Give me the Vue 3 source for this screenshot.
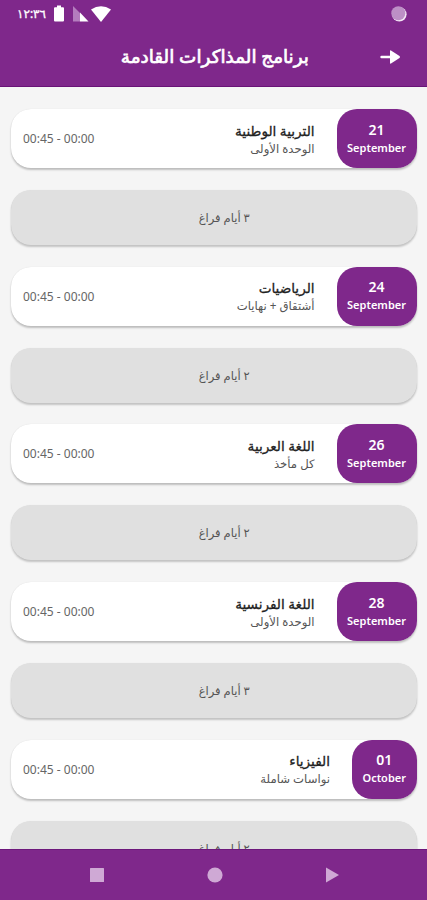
<script setup>
import { ref } from "vue";

const exams = ref([
  { id: 1, day: "21", month: "September", title: "التربية الوطنية", note: "الوحدة الأولى", time: "00:45 - 00:00", gap: "٣ أيام فراغ" },
  { id: 2, day: "24", month: "September", title: "الرياضيات", note: "أشتقاق + نهايات", time: "00:45 - 00:00", gap: "٢ أيام فراغ" },
  { id: 3, day: "26", month: "September", title: "اللغة العربية", note: "كل مأخذ", time: "00:45 - 00:00", gap: "٢ أيام فراغ" },
  { id: 4, day: "28", month: "September", title: "اللغة الفرنسية", note: "الوحدة الأولى", time: "00:45 - 00:00", gap: "٣ أيام فراغ" },
  { id: 5, day: "01", month: "October", title: "الفيزياء", note: "نواسات شاملة", time: "00:45 - 00:00", gap: "٢ أيام فراغ" },
]);
</script>

<template>
  <div class="screen" dir="rtl">
    <header class="top">
      <div class="status" dir="ltr">
        <span class="clock">١٢:٣٦</span>
        <svg class="battery" width="10" height="17" viewBox="0 0 10 17">
          <path d="M3 0.5h4v1.8h2a1 1 0 0 1 1 1V15.5a1 1 0 0 1-1 1H1a1 1 0 0 1-1-1V3.3a1 1 0 0 1 1-1h2z" fill="#fff" />
        </svg>
        <svg class="signal" width="16" height="16" viewBox="0 0 16 16">
          <path d="M0 0L7 7V15.5H0z" fill="#b47dbe" />
          <path d="M7 6.5L15.5 15.5H7z" fill="#fff" />
        </svg>
        <svg class="wifi" width="20" height="16" viewBox="0 0 20 16">
          <path d="M0 3.5Q10-3 20 3.5L10 16z" fill="#fff" />
        </svg>
        <svg class="sync" width="16" height="16" viewBox="0 0 16 16">
          <circle cx="8.3" cy="8.3" r="7.3" fill="#f3e6f5" />
          <circle cx="7.3" cy="7.3" r="7" fill="#bd8fc6" />
        </svg>
      </div>
      <div class="title-bar">
        <svg class="back" width="21" height="14" viewBox="0 0 21 14">
          <path d="M1.5 7h11" stroke="#fff" stroke-width="2.4" stroke-linecap="round" />
          <path d="M10 1Q10 0 11 0.5L19.5 6Q20.6 7 19.5 8L11 13.500Q10 14 10 13z" fill="#fff" />
        </svg>
        <h1>برنامج المذاكرات القادمة</h1>
      </div>
    </header>

    <main class="list">
      <template v-for="exam in exams" :key="exam.id">
        <div class="card">
          <div class="date">
            <span class="day">{{ exam.day }}</span>
            <span>{{ exam.month }}</span>
          </div>
          <div class="info">
            <h2>{{ exam.title }}</h2>
            <p>{{ exam.note }}</p>
          </div>
          <span class="time" dir="ltr">{{ exam.time }}</span>
        </div>
        <div class="gap">{{ exam.gap }}</div>
      </template>
    </main>

    <nav class="bottom" dir="ltr">
      <svg width="16" height="16" viewBox="0 0 16 16"><rect x="1" y="1" width="14" height="14" rx="0.5" fill="#cfa9d5" /></svg>
      <svg width="16" height="16" viewBox="0 0 16 16"><circle cx="8" cy="8" r="7.6" fill="#cfa9d5" /></svg>
      <svg width="16" height="16" viewBox="0 0 16 16"><path d="M2 0.5L15 8L2 15.5z" fill="#cfa9d5" /></svg>
    </nav>
  </div>
</template>

<style>
body {
  margin: 0;
}
</style>

<style scoped>
.screen {
  display: flex;
  flex-direction: column;
  width: 427px;
  height: 900px;
  overflow: hidden;
  background-color: #f5f5f5;
  font-family: "Noto Sans", "DejaVu Sans", sans-serif;
}
.top {
  flex: none;
  height: 87px;
  background-color: #7f288b;
  border-bottom: 1px solid #691477;
  box-sizing: border-box;
  color: #fff;
}
.status {
  display: flex;
  align-items: center;
  height: 27px;
  padding: 0 20px 0 17px;
}
.clock {
  width: 30px;
  font-size: 12px;
  -webkit-text-stroke: 0.3px #fff;
  white-space: nowrap;
}
.battery {
  margin-left: 7px;
}
.signal {
  margin-left: 9px;
}
.wifi {
  margin-left: 2px;
}
.sync {
  margin-left: auto;
}
.title-bar {
  display: flex;
  align-items: center;
  height: 60px;
  padding-right: 26px;
}
h1 {
  margin: 0 71px 2px 0;
  font-size: 18.4px;
  font-weight: 400;
  line-height: 26px;
  -webkit-text-stroke: 0.7px #fff;
  white-space: nowrap;
}
.list {
  flex: 1;
  min-height: 0;
  overflow: hidden;
  padding: 22px 10.5px 0 11px;
}
.card {
  display: flex;
  align-items: center;
  height: 59px;
  margin-bottom: 22px;
  border-radius: 20px;
  background-color: #fff;
  box-shadow: 0 2px 2px rgba(0, 0, 0, 0.22), 0 0 1px rgba(0, 0, 0, 0.12);
}
.date {
  display: flex;
  flex-direction: column;
  align-items: center;
  justify-content: center;
  height: 59px;
  padding: 0 10.5px;
  box-sizing: border-box;
  border-radius: 20px;
  background-color: #7f288b;
  color: #fff;
  font-size: 11px;
  font-weight: 600;
  line-height: 18px;
}
.day {
  font-size: 14px;
}
.info {
  margin-right: 22px;
  white-space: nowrap;
}
h2 {
  margin: 0;
  font-size: 13.6px;
  font-weight: 400;
  line-height: 19px;
  -webkit-text-stroke: 0.3px #222;
  color: #222;
}
.info p {
  margin: 0;
  font-size: 11.7px;
  line-height: 17px;
  color: #555;
}
.time {
  margin: 0 auto 0 12px;
  font-size: 12px;
  color: #666;
}
.gap {
  display: flex;
  align-items: center;
  justify-content: center;
  height: 55px;
  margin-bottom: 21.7px;
  padding-left: 21px;
  border-radius: 20px;
  background-color: #e0e0e0;
  box-shadow: 0 2px 2px rgba(0, 0, 0, 0.2), 0 0 1px rgba(0, 0, 0, 0.1);
  font-size: 11.5px;
  color: #555;
}
.bottom {
  flex: none;
  display: flex;
  align-items: center;
  justify-content: space-between;
  height: 51px;
  padding: 0 87px 1px 89px;
  box-sizing: border-box;
  border-top: 1px solid #6d187b;
  background-color: #7f288b;
}
</style>
